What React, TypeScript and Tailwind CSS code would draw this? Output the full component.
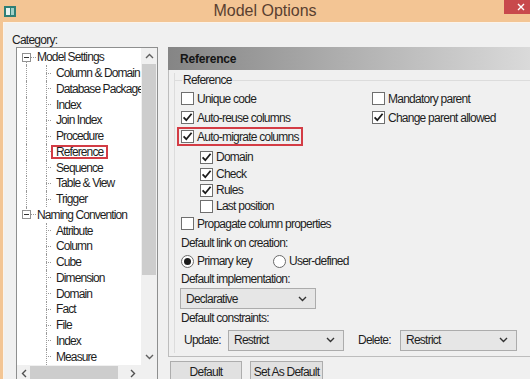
import React from "react";

const txt = "text-[12px] tracking-[-0.75px] text-[#1e1e1e] whitespace-nowrap";
const ttxt = "text-[12px] tracking-[-0.9px] text-[#1e1e1e] whitespace-nowrap";

function Check({ checked }: { checked?: boolean }) {
  return (
    <div className="w-[13px] h-[13px] shrink-0 border border-[#6f6f6f] bg-white flex items-center justify-center">
      {checked && (
        <svg width="11" height="11" viewBox="0 0 11 11">
          <path d="M1.6 5.4 L4.3 8.2 L9.6 1.8" fill="none" stroke="#1b1b1b" strokeWidth="1.8" />
        </svg>
      )}
    </div>
  );
}

function CheckRow({ label, checked, h = "h-[19px]" }: { label: string; checked?: boolean; h?: string }) {
  return (
    <div className={`${h} flex items-center gap-[3px]`}>
      <Check checked={checked} />
      <span className={txt}>{label}</span>
    </div>
  );
}

function Radio({ on }: { on?: boolean }) {
  return (
    <div className="w-[13px] h-[13px] shrink-0 rounded-full border border-[#6a6a6a] bg-white flex items-center justify-center">
      {on && <div className="w-[7px] h-[7px] rounded-full bg-[#1b1b1b]" />}
    </div>
  );
}

function Chevron() {
  return (
    <svg width="9" height="6" viewBox="0 0 9 6">
      <path d="M1 1 L4.5 4.5 L8 1" fill="none" stroke="#333" strokeWidth="1.4" />
    </svg>
  );
}

function Dropdown({ label, w }: { label: string; w: string }) {
  return (
    <div className={`${w} h-[21px] shrink-0 border border-[#acacac] bg-[#e6e6e6] flex items-center justify-between pl-[5px] pr-[8px]`}>
      <span className={txt}>{label}</span>
      <Chevron />
    </div>
  );
}

const dot = "border-dotted border-[#9a9a9a]";
const row = "h-[15.76px] relative flex items-center";

function RootRow({ label, lineBelow, lineAbove }: { label: string; lineBelow?: boolean; lineAbove?: boolean }) {
  return (
    <div className={row}>
      {lineAbove && <div className={`absolute left-[9px] top-0 h-[4px] border-l ${dot}`} />}
      {lineBelow && <div className={`absolute left-[9px] bottom-0 h-[4px] border-l ${dot}`} />}
      <div className="ml-[5px] w-[9px] h-[9px] shrink-0 border border-[#919191] bg-white flex items-center justify-center">
        <div className="w-[5px] h-px bg-[#333]" />
      </div>
      <div className={`w-[5px] border-t ${dot}`} />
      <span className={`ml-[1px] ${ttxt}`}>{label}</span>
    </div>
  );
}

function ChildRow({ label, rootLine, hl }: { label: string; rootLine?: boolean; hl?: boolean }) {
  return (
    <div className={row}>
      {rootLine && <div className={`absolute left-[9px] top-0 bottom-0 border-l ${dot}`} />}
      <div className={`absolute left-[29px] top-0 bottom-0 border-l ${dot}`} />
      <div className={`ml-[29px] w-[5px] shrink-0 border-t ${dot}`} />
      <span
        className={`px-[3px] border-2 h-[14px] flex items-center ${ttxt} ${hl ? "border-[#d33c45]" : "border-transparent"}`}
      >
        {label}
      </span>
    </div>
  );
}

const modelChildren = [
  "Column & Domain",
  "Database Package",
  "Index",
  "Join Index",
  "Procedure",
  "Reference",
  "Sequence",
  "Table & View",
  "Trigger",
];
const namingChildren = ["Attribute", "Column", "Cube", "Dimension", "Domain", "Fact", "File", "Index", "Measure"];

export default function App() {
  return (
    <div className="w-[530px] h-[379px] overflow-hidden bg-[#f3c594] flex flex-col font-['Liberation_Sans',Arial,sans-serif]">
      {/* Title bar */}
      <div className="h-[22px] shrink-0 flex items-center">
        <div className="w-[26px] pl-[4px] flex items-center">
          <svg width="12" height="11" viewBox="0 0 12 11">
            <rect x="0" y="0" width="12" height="11" fill="#2f7f76" />
            <rect x="2" y="2" width="4" height="7" fill="#e9f4f1" />
            <rect x="7" y="2" width="3" height="7" fill="#9fd0c6" />
          </svg>
        </div>
        <div className="flex-1 text-center text-[16px] text-[#5a4030] leading-none">Model Options</div>
        <div className="w-[26px] h-[14px] self-start bg-[#c8494c] flex items-center justify-center pl-[8px]">
          <svg width="8" height="8" viewBox="0 0 8 8">
            <path d="M1 1 L7 7 M7 1 L1 7" stroke="#fff" strokeWidth="1.4" />
          </svg>
        </div>
      </div>

      {/* Body */}
      <div className="flex-1 ml-[3px] bg-[#f0f0f0] border-t border-l border-[#fbf3ea] flex">
        {/* Left: category */}
        <div className="flex flex-col pl-[8px] pt-[10px]">
          <div className={`h-[14px] leading-[14px] ${txt}`}>Category:</div>
          <div className="ml-[4px] w-[142px] h-[340px] border border-[#8e8f8f] bg-white flex flex-col">
            <div className="flex h-[317px]">
              <div className="w-[124px] overflow-hidden pt-[1.5px]">
                <RootRow label="Model Settings" lineBelow />
                {modelChildren.map((c) => (
                  <ChildRow key={c} label={c} rootLine hl={c === "Reference"} />
                ))}
                <RootRow label="Naming Convention" lineAbove />
                {namingChildren.map((c) => (
                  <ChildRow key={c} label={c} />
                ))}
              </div>
              {/* vertical scrollbar */}
              <div className="w-[16px] bg-[#f0f0f0] flex flex-col">
                <div className="h-[16px] flex items-center justify-center">
                  <svg width="9" height="6" viewBox="0 0 9 6">
                    <path d="M1 5 L4.5 1.5 L8 5" fill="none" stroke="#606060" strokeWidth="1.4" />
                  </svg>
                </div>
                <div className="h-[211px] mx-[1px] bg-[#cdcdcd]" />
                <div className="flex-1" />
                <div className="h-[16px] flex items-center justify-center">
                  <svg width="9" height="6" viewBox="0 0 9 6">
                    <path d="M1 1 L4.5 4.5 L8 1" fill="none" stroke="#606060" strokeWidth="1.4" />
                  </svg>
                </div>
              </div>
            </div>
            {/* horizontal scrollbar */}
            <div className="h-[17px] flex bg-[#f0f0f0]">
              <div className="w-[13px] flex items-center justify-center">
                <svg width="6" height="9" viewBox="0 0 6 9">
                  <path d="M5 1 L1.5 4.5 L5 8" fill="none" stroke="#505050" strokeWidth="1.4" />
                </svg>
              </div>
              <div className="w-[88px] my-[1px] bg-[#cdcdcd]" />
              <div className="flex-1" />
              <div className="w-[16px] flex items-center justify-center">
                <svg width="6" height="9" viewBox="0 0 6 9">
                  <path d="M1 1 L4.5 4.5 L1 8" fill="none" stroke="#505050" strokeWidth="1.4" />
                </svg>
              </div>
              <div className="w-[16px] bg-[#f0f0f0]" />
            </div>
          </div>
        </div>

        {/* Right: options panel */}
        <div className="flex-1 ml-[10px] pt-[24px] flex flex-col">
          <div className="h-[23px] shrink-0 bg-gradient-to-r from-[#858585] via-[#b0b0b0] to-[#dadada] flex items-center pl-[12px] text-[12px] font-bold tracking-[-0.2px] text-[#151515]">
            Reference
          </div>
          <div className="h-[287px] shrink-0 border-l border-b border-[#bdbdbd] pl-[5px] pt-[3px]">
            <div className="h-[280px] border-l border-[#dcdcdc] flex flex-col">
              <div className="h-[14px] flex items-center">
                <div className="w-[7px] border-t border-[#dcdcdc]" />
                <span className={`px-[1px] ${txt}`}>Reference</span>
                <div className="flex-1 border-t border-[#dcdcdc]" />
              </div>
              <div className="pl-[6px] flex flex-col">
                <div className="mt-[2px] grid grid-cols-[191px_1fr]">
                  <CheckRow label="Unique code" />
                  <CheckRow label="Mandatory parent" />
                  <CheckRow label="Auto-reuse columns" checked />
                  <CheckRow label="Change parent allowed" checked />
                </div>
                <div className="h-[19px] flex">
                  <div className="-ml-[4px] h-[19px] border-2 border-[#d33c45] pl-[2px] pr-[2px] flex items-center gap-[3px]">
                    <Check checked />
                    <span className={txt}>Auto-migrate columns</span>
                  </div>
                </div>
                <div className="pl-[19px] mt-[2px] flex flex-col">
                  <CheckRow label="Domain" checked h="h-[18px]" />
                  <CheckRow label="Check" checked h="h-[16px]" />
                  <CheckRow label="Rules" checked h="h-[16px]" />
                  <CheckRow label="Last position" h="h-[16px]" />
                </div>
                <CheckRow label="Propagate column properties" />
                <div className={`h-[19px] flex items-center ${txt}`}>Default link on creation:</div>
                <div className="h-[18px] flex items-center">
                  <div className="w-[92px] flex items-center gap-[3px]">
                    <Radio on />
                    <span className={txt}>Primary key</span>
                  </div>
                  <div className="flex items-center gap-[3px]">
                    <Radio />
                    <span className={txt}>User-defined</span>
                  </div>
                </div>
                <div className={`h-[18px] flex items-center ${txt}`}>Default implementation:</div>
                <div className="-ml-[1px] flex">
                  <Dropdown label="Declarative" w="w-[136px]" />
                </div>
                <div className={`h-[18px] flex items-center ${txt}`}>Default constraints:</div>
                <div className="mt-[3px] h-[20px] flex items-center">
                  <span className={`ml-[3px] w-[44px] ${txt}`}>Update:</span>
                  <Dropdown label="Restrict" w="w-[116px]" />
                  <span className={`ml-[14px] w-[42px] ${txt}`}>Delete:</span>
                  <Dropdown label="Restrict" w="w-[117px]" />
                </div>
              </div>
            </div>
          </div>
          <div className="mt-[4px] pl-[2px] flex gap-[8px]">
            <div className={`w-[72px] h-[22px] border border-[#adadad] bg-[#e1e1e1] flex items-center justify-center ${txt}`}>
              Default
            </div>
            <div className={`w-[73px] h-[22px] border border-[#adadad] bg-[#e1e1e1] flex items-center justify-center ${txt}`}>
              Set As Default
            </div>
          </div>
        </div>
      </div>
    </div>
  );
}
